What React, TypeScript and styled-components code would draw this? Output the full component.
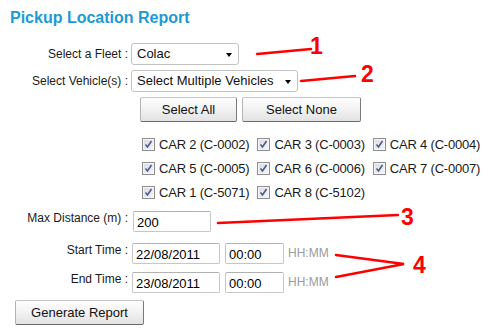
import React from 'react';
import styled, {createGlobalStyle} from 'styled-components';

const GlobalStyle = createGlobalStyle`
    body {
        margin: 0;
        background: #fff;
        font-family: "Liberation Sans", Arial, sans-serif;
        color: #1a1a1a;
    }
`;

const Page = styled.div`
    position: relative;
    width: 487px;
    height: 331px;
    overflow: hidden;
`;

const Title = styled.h1`
    margin: 0;
    padding: 8px 0 0 10px;
    font-size: 16px;
    line-height: 19px;
    font-weight: bold;
    color: #1b9ad7;
`;

const Row = styled.div<{$top: number; $align?: string}>`
    display: flex;
    align-items: ${p => p.$align || 'center'};
    margin-top: ${p => p.$top}px;
`;

const Label = styled.label`
    flex: none;
    width: 128px;
    text-align: right;
    font-size: 12px;
    line-height: 14px;
    color: #1a1a1a;
    white-space: nowrap;
`;

const Field = styled.div<{$indent?: number}>`
    display: flex;
    align-items: center;
    gap: 5px;
    margin-left: ${p => p.$indent ?? 3}px;
`;

const SelectBox = styled.div<{$width: number}>`
    position: relative;
    box-sizing: border-box;
    width: ${p => p.$width}px;
    height: 22px;
    padding-left: 5px;
    border: 1px solid #c3c3c3;
    border-radius: 3px;
    background: #fff;
    font-size: 13px;
    line-height: 20px;
    color: #111;
`;

const Caret = styled.span`
    position: absolute;
    right: 6px;
    top: 9px;
    width: 0;
    height: 0;
    border-left: 3.5px solid transparent;
    border-right: 3.5px solid transparent;
    border-top: 4px solid #000;
`;

const Button = styled.button<{$width: number}>`
    box-sizing: border-box;
    width: ${p => p.$width}px;
    height: 25px;
    padding: 0;
    border: 1px solid;
    border-color: #c4c4c4 #7a7a7a #6a6a6a #b4b4b4;
    border-radius: 2px;
    background: linear-gradient(#fefefe, #f3f3f3 45%, #e2e2e2);
    font-family: "Liberation Sans", Arial, sans-serif;
    font-size: 13px;
    color: #111;
`;

const CheckGrid = styled.div`
    display: grid;
    grid-template-columns: repeat(3, max-content);
    grid-auto-rows: 24px;
    column-gap: 8px;
    margin: 10px 0 0 142px;
`;

const CheckItem = styled.label`
    display: flex;
    align-items: center;
    gap: 4px;
    font-size: 13px;
    letter-spacing: -0.2px;
    color: #1a1a1a;
`;

const Box = styled.span`
    display: flex;
    box-sizing: border-box;
    width: 13px;
    height: 13px;
    border: 1px solid #8f8f8f;
    background: linear-gradient(135deg, #dcdcdc, #f6f6f6);
    box-shadow: inset 0 0 0 1px #f4f4f4;
`;

const TextInput = styled.div<{$width: number}>`
    box-sizing: border-box;
    width: ${p => p.$width}px;
    height: 21px;
    padding-left: 3px;
    border: 1px solid #c6c6c6;
    border-top-color: #b2b2b2;
    border-radius: 2px;
    background: #fff;
    font-size: 13px;
    line-height: 22px;
    color: #000;
`;

const Hint = styled.span`
    font-size: 12px;
    color: #9a9a9a;
    margin-left: -1px;
    align-self: flex-start;
    line-height: 14px;
    margin-top: 3px;
`;

const Overlay = styled.svg`
    position: absolute;
    left: 0;
    top: 0;
    pointer-events: none;
`;

const Num = styled.text`
    font-family: "Liberation Sans", Arial, sans-serif;
    font-weight: bold;
    font-size: 23px;
    fill: #ff0000;
`;

const cars = [
    'CAR 2 (C-0002)', 'CAR 3 (C-0003)', 'CAR 4 (C-0004)',
    'CAR 5 (C-0005)', 'CAR 6 (C-0006)', 'CAR 7 (C-0007)',
    'CAR 1 (C-5071)', 'CAR 8 (C-5102)',
];

const Check = () => (
    <Box>
        <svg width="11" height="11" viewBox="0 0 11 11">
            <path d="M2.5 5.5 L4.5 8 L8.5 2" fill="none" stroke="#4a5c98" strokeWidth="1.6" />
        </svg>
    </Box>
);

const Annotations = () => (
    <Overlay width="487" height="331" viewBox="0 0 487 331">
        <g stroke="#ff0000" strokeWidth="2.5" fill="none" strokeLinecap="round">
            <line x1="257" y1="54" x2="311" y2="49" />
            <line x1="301" y1="81" x2="355" y2="76" />
            <line x1="218" y1="223" x2="398" y2="215" />
            <polyline points="336,255 404,264 336,277" />
        </g>
        <Num x="310" y="54">1</Num>
        <Num x="361" y="82">2</Num>
        <Num x="401" y="225">3</Num>
        <Num x="413" y="273">4</Num>
    </Overlay>
);

export default function App() {
    return (
        <Page>
            <GlobalStyle />
            <Title>Pickup Location Report</Title>

            <Row $top={16}>
                <Label>Select a Fleet :</Label>
                <Field>
                    <SelectBox $width={108}>Colac<Caret /></SelectBox>
                </Field>
            </Row>
            <Row $top={5}>
                <Label>Select Vehicle(s) :</Label>
                <Field>
                    <SelectBox $width={167}>Select Multiple Vehicles<Caret /></SelectBox>
                </Field>
            </Row>
            <Row $top={5}>
                <Field $indent={140}>
                    <Button $width={97}>Select All</Button>
                    <Button $width={119}>Select None</Button>
                </Field>
            </Row>

            <CheckGrid>
                {cars.map(car => (
                    <CheckItem key={car}>
                        <Check />
                        {car}
                    </CheckItem>
                ))}
            </CheckGrid>

            <Row $top={7} $align="flex-start">
                <Label>Max Distance (m) :</Label>
                <Field $indent={5}>
                    <TextInput $width={78}>200</TextInput>
                </Field>
            </Row>
            <Row $top={11} $align="flex-start">
                <Label>Start Time :</Label>
                <Field $indent={4}>
                    <TextInput $width={88}>22/08/2011</TextInput>
                    <TextInput $width={59}>00:00</TextInput>
                    <Hint>HH:MM</Hint>
                </Field>
            </Row>
            <Row $top={8} $align="flex-start">
                <Label>End Time :</Label>
                <Field $indent={4}>
                    <TextInput $width={88}>23/08/2011</TextInput>
                    <TextInput $width={59}>00:00</TextInput>
                    <Hint>HH:MM</Hint>
                </Field>
            </Row>
            <Row $top={7}>
                <Field $indent={15}>
                    <Button $width={129}>Generate Report</Button>
                </Field>
            </Row>

            <Annotations />
        </Page>
    );
}
